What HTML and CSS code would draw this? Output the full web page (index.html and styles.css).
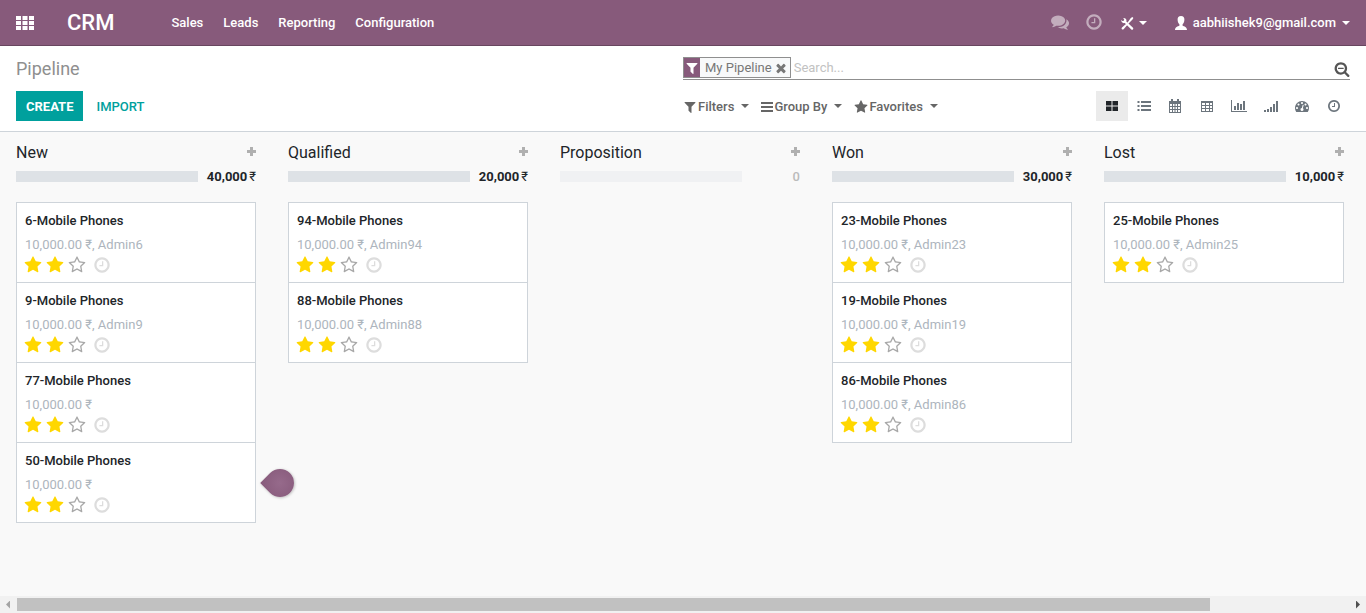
FILE: index.html
```html
<!DOCTYPE html>
<html lang="en">
<head>
<meta charset="utf-8">
<title>Pipeline - CRM</title>
<link rel="stylesheet" href="styles.css">
</head>
<body>
<svg class="sprite" aria-hidden="true">
  <symbol id="star" viewBox="0 0 1792 1792"><path d="M1728 647q0 22-26 48l-363 354 86 500q1 7 1 20 0 21-10.500 35.500t-30.500 14.500q-19 0-40-12l-449-236-449 236q-22 12-40 12-21 0-31.500-14.500t-10.500-35.500q0-6 2-20l86-500-364-354q-25-27-25-48 0-37 56-46l502-73 225-455q19-41 49-41t49 41l225 455 502 73q56 9 56 46z"/></symbol>
  <symbol id="star-o" viewBox="0 0 1792 1792"><path d="M1201 1004l306-297-422-62-189-382-189 382-422 62 306 297-73 421 378-199 377 199zm527-357q0 22-26 48l-363 354 86 500q1 7 1 20 0 50-41 50-19 0-40-12l-449-236-449 236q-22 12-40 12-21 0-31.500-14.500t-10.500-35.500q0-6 2-20l86-500-364-354q-25-27-25-48 0-37 56-46l502-73 225-455q19-41 49-41t49 41l225 455 502 73q56 9 56 46z"/></symbol>
  <symbol id="clock" viewBox="0 0 1792 1792"><path d="M1024 544v448q0 14-9 23t-23 9h-320q-14 0-23-9t-9-23v-64q0-14 9-23t23-9h224v-352q0-14 9-23t23-9h64q14 0 23 9t9 23zm416 352q0-148-73-273t-198-198-273-73-273 73-198 198-73 273 73 273 198 198 273 73 273-73 198-198 73-273zm224 0q0 209-103 385.500t-279.500 279.500-385.500 103-385.500-103-279.500-279.500-103-385.500 103-385.500 279.500-279.500 385.500-103 385.500 103 279.500 279.500 103 385.500z"/></symbol>
  <symbol id="filter" viewBox="0 0 1792 1792"><path d="M1595 295q17 41-14 70l-493 493v742q0 42-39 59-13 5-25 5-27 0-45-19l-256-256q-19-19-19-45v-486l-493-493q-31-29-14-70 17-39 59-39h1280q42 0 59 39z"/></symbol>
  <symbol id="comments" viewBox="0 0 1792 1792"><path d="M1408 768q0 139-94 257t-256.500 186.500-353.500 68.500q-86 0-176-16-124 88-278 128-36 9-86 16h-3q-11 0-20.500-8t-11.500-21q-1-8 2-19l10-16 13-14q5-6 23-25t26-29.500 22.500-29 25-38.500 20.500-44q-124-72-195-177t-71-224q0-139 94-257t256.500-186.500 353.500-68.500 353.500 68.500 256.500 186.500 94 257zm384 256q0 120-71 224.500t-195 176.500q10 24 20.500 44t25 38.500 22.500 29 26 29.500 23 25l12 14 9 16 2 13q-3 14-13 22t-22 7q-50-7-86-16-154-40-278-128-90 16-176 16-271 0-472-132 58 4 88 4 161 0 309-45t264-129q125-92 192-212t67-254q0-77-23-152 129 71 204 178t75 230z"/></symbol>
  <symbol id="times" viewBox="0 0 1792 1792"><path d="M1490 1322q0 40-28 68l-136 136q-28 28-68 28t-68-28l-294-294-294 294q-28 28-68 28t-68-28l-136-136q-28-28-28-68t28-68l294-294-294-294q-28-28-28-68t28-68l136-136q28-28 68-28t68 28l294 294 294-294q28-28 68-28t68 28l136 136q28 28 28 68t-28 68l-294 294 294 294q28 28 28 68z"/></symbol>
  <symbol id="search-minus" viewBox="0 0 1792 1792"><path d="M1088 800v64q0 13-9.500 22.500t-22.500 9.500h-576q-13 0-22.500-9.500t-9.500-22.500v-64q0-13 9.500-22.500t22.500-9.500h576q13 0 22.500 9.500t9.500 22.500zm128 32q0-185-131.500-316.500t-316.500-131.500-316.500 131.500-131.500 316.500 131.500 316.500 316.500 131.500 316.500-131.500 131.500-316.500zm512 832q0 53-37.500 90.500t-90.500 37.500q-54 0-90-38l-343-342q-179 124-399 124-143 0-273.500-55.500t-225-150-150-225-55.500-273.500 55.500-273.500 150-225 225-150 273.500-55.500 273.500 55.500 225 150 150 225 55.500 273.500q0 220-124 399l343 343q37 37 37 90z"/></symbol>
  <symbol id="gauge" viewBox="0 0 1792 1792"><path d="M384 1152q0-53-37.500-90.500t-90.500-37.500-90.500 37.500-37.500 90.500 37.500 90.500 90.500 37.500 90.500-37.500 37.500-90.500zm192-448q0-53-37.500-90.500t-90.500-37.500-90.500 37.500-37.500 90.500 37.500 90.500 90.500 37.500 90.500-37.500 37.500-90.500zm428 481l101-382q6-26-7.500-48.500t-38.500-29.500-48 6.500-30 39.500l-101 382q-60 5-107 43.500t-63 98.500q-20 77 20 146t117 89 146-20 89-117q16-60-6-117t-72-91zm660-33q0-53-37.500-90.500t-90.500-37.500-90.500 37.500-37.500 90.500 37.500 90.500 90.500 37.500 90.500-37.500 37.500-90.500zm-640-640q0-53-37.500-90.500t-90.500-37.500-90.500 37.500-37.500 90.500 37.500 90.500 90.500 37.500 90.500-37.500 37.500-90.500zm448 192q0-53-37.500-90.500t-90.500-37.500-90.500 37.500-37.500 90.500 37.500 90.500 90.500 37.500 90.500-37.500 37.500-90.500zm320 448q0 261-141 483-19 29-54 29h-1402q-35 0-54-29-141-221-141-483 0-182 71-348t191-286 286-191 348-71 348 71 286 191 191 286 71 348z"/></symbol>
  <symbol id="apps" viewBox="0 0 18 14"><path d="M0 0h5v4H0zM6.500 0h5v4h-5zM13 0h5v4h-5zM0 5h5v4H0zM6.500 5h5v4h-5zM13 5h5v4h-5zM0 10h5v4H0zM6.500 10h5v4h-5zM13 10h5v4h-5z"/></symbol>
  <symbol id="tools" viewBox="0 0 14 14"><path d="M13 11.700 6.300 5.500C7 3.500 5.400 1.600 3.200 2l1 1.500-.4 1.300-1.400.3L1.200 4C1 6 2.800 7.600 4.800 7l6.500 6.500c1.300.8 2.500-.7 1.700-1.800zM13.400 2l-1-.9-1.600 1L7.600 6.500 2 11.500c-1.200 1.300.4 2.800 1.600 1.700l5-5.700L12.500 3.600z"/></symbol>
  <symbol id="user" viewBox="0 0 14 14"><path d="M7 0c2.400 0 3.500 1.600 3.400 3.800C10.300 6 9.600 7.300 8.600 8.300v1.400c1.600.7 4.400 1.200 4.400 4.300H1c0-3.100 2.800-3.600 4.400-4.300V8.300c-1-1-1.700-2.300-1.800-4.500C3.500 1.600 4.600 0 7 0z"/></symbol>
  <symbol id="bars" viewBox="0 0 12 10"><path d="M0 0h12v2H0zM0 4h12v2H0zM0 8h12v2H0z"/></symbol>
  <symbol id="plus" viewBox="0 0 9 9"><path d="M3 0h3v3h3v3H6v3H3V6H0V3h3z"/></symbol>
  <symbol id="th-large" viewBox="0 0 14 14"><path d="M1 2h5.500v4.500H1zM7.500 2H13v4.500H7.500zM1 7.500h5.500V12H1zM7.500 7.500H13V12H7.500z"/></symbol>
  <symbol id="list" viewBox="0 0 14 14"><path d="M.5 2h2v2h-2zM4 2h10v2H4zM.5 6h2v2h-2zM4 6h10v2H4zM.5 10h2v2h-2zM4 10h10v2H4z"/></symbol>
  <symbol id="calendar" viewBox="0 0 14 14"><path fill-rule="evenodd" d="M1 2h2V0h2v2h4V0h2v2h2v12H1zM2 5v2h2V5zm3 0v2h1.500V5zm2.500 0v2H9V5zM10 5v2h2V5zM2 8v2h2V8zm3 0v2h1.500V8zm2.500 0v2H9V8zM10 8v2h2V8zM2 11v2h2v-2zm3 0v2h1.500v-2zm2.500 0v2H9v-2zm2.500 0v2h2v-2z"/></symbol>
  <symbol id="table" viewBox="0 0 14 14"><path fill-rule="evenodd" d="M1 2h12v11H1zM2 4v2h3V4zm4 0v2h3V4zm4 0v2h2V4zM2 7v2h3V7zm4 0v2h3V7zm4 0v2h2V7zm-8 3v2h3v-2zm4 0v2h3v-2zm4 0v2h2v-2z"/></symbol>
  <symbol id="chart" viewBox="0 0 16 14"><path d="M0 1h1v11h15v1H0zM3 7h2v4H3zM6 4h2v7H6zM9 5h2v6H9zM12 2h2v9h-2z"/></symbol>
  <symbol id="signal" viewBox="0 0 14 14"><path d="M0 11h2v2H0zM3 10h2v3H3zM6 8h2v5H6zM9 5h2v8H9zM12 2h2v11h-2z"/></symbol>
</svg>

<header class="navbar">
  <button class="apps" aria-label="Applications"><svg><use href="#apps"/></svg></button>
  <a class="brand" href="#">CRM</a>
  <nav class="menu">
    <a href="#">Sales</a><a href="#">Leads</a><a href="#">Reporting</a><a href="#">Configuration</a>
  </nav>
  <div class="systray">
    <button class="dim chat" aria-label="Conversations"><svg class="i18"><use href="#comments"/></svg></button>
    <button class="dim activity" aria-label="Activities"><svg class="i18"><use href="#clock"/></svg></button>
    <button class="debug" aria-label="Developer tools"><svg class="i14"><use href="#tools"/></svg><span class="caret"></span></button>
    <button class="account"><svg class="i14"><use href="#user"/></svg><span>aabhiishek9@gmail.com</span><span class="caret"></span></button>
  </div>
</header>

<section class="control-panel">
  <div class="left">
    <h1>Pipeline</h1>
    <div class="actions"><button class="primary">CREATE</button><button class="link">IMPORT</button></div>
  </div>
  <div class="right">
    <div class="search">
      <div class="facet"><span class="facet-icon"><svg class="i14"><use href="#filter"/></svg></span><span>My Pipeline</span><button aria-label="Remove filter"><svg class="i14"><use href="#times"/></svg></button></div>
      <input type="text" placeholder="Search..." aria-label="Search">
      <button class="search-btn" aria-label="Search options"><svg class="i16"><use href="#search-minus"/></svg></button>
    </div>
    <div class="tools">
      <div class="options">
        <button><svg class="i14"><use href="#filter"/></svg><span>Filters</span><span class="caret"></span></button>
        <button><svg class="bars"><use href="#bars"/></svg><span>Group By</span><span class="caret"></span></button>
        <button><svg class="i14"><use href="#star"/></svg><span>Favorites</span><span class="caret"></span></button>
      </div>
      <div class="views">
        <button class="active" aria-label="Kanban"><svg class="i14"><use href="#th-large"/></svg></button>
        <button aria-label="List"><svg class="i14"><use href="#list"/></svg></button>
        <button aria-label="Calendar"><svg class="i14"><use href="#calendar"/></svg></button>
        <button aria-label="Pivot"><svg class="i14"><use href="#table"/></svg></button>
        <button aria-label="Graph"><svg class="i16"><use href="#chart"/></svg></button>
        <button aria-label="Cohort"><svg class="i14"><use href="#signal"/></svg></button>
        <button aria-label="Dashboard"><svg class="i14"><use href="#gauge"/></svg></button>
        <button aria-label="Activity"><svg class="i14"><use href="#clock"/></svg></button>
      </div>
    </div>
  </div>
</section>

<main class="board" id="board"></main>

<div class="scrollbar" aria-hidden="true"><span class="arrow prev"></span><div class="track"><div class="thumb"></div></div><span class="arrow next"></span></div>
<script src="board.js"></script>
</body>
</html>
```

FILE: styles.css
```css
* { box-sizing: border-box; }
body {
  margin: 0;
  min-height: 100vh;
  display: flex;
  flex-direction: column;
  background: #f9f9f9;
  color: #212529;
  font: 13px/20px Roboto, "Noto Sans", sans-serif;
}
a { color: inherit; text-decoration: none; }
button {
  display: flex;
  align-items: center;
  padding: 0;
  border: 0;
  background: none;
  color: inherit;
  font: inherit;
  cursor: pointer;
}
svg { display: block; flex: none; fill: currentColor; }
.sprite { position: absolute; width: 0; height: 0; }
.i14 { width: 14px; height: 14px; }
.i16 { width: 16px; height: 16px; }
.i18 { width: 18px; height: 18px; }
.caret {
  border: 4px solid transparent;
  border-top-color: currentColor;
  border-bottom: 0;
}

.navbar {
  display: flex;
  align-items: center;
  height: 46px;
  padding: 0 16px;
  background: #875a7b;
  border-bottom: 1px solid #68465f;
  color: #fff;
  font-weight: 500;
}
.apps svg { width: 18px; height: 14px; }
.brand { margin-left: 33px; font-size: 22px; }
.menu { display: flex; gap: 20px; margin-left: 57px; }
.systray { display: flex; align-items: center; margin-left: auto; }
.dim { padding-bottom: 2px; opacity: .5; }
.chat { margin-right: 16px; }
.activity { margin-right: 17px; }
.debug { gap: 5px; margin-right: 27px; }
.account { gap: 5px; }
.account .caret { margin-left: 1px; }

.control-panel {
  display: grid;
  grid-template-columns: 1fr 1fr;
  padding: 10px 16px;
  background: #fff;
  border-bottom: 1px solid #ced4da;
}
h1 { margin: 0 0 10px; font-size: 18px; font-weight: 400; line-height: 25px; color: #8f8f8f; }
.actions { display: flex; gap: 13px; font-weight: 500; }
.actions button { height: 30px; padding-top: 2px; }
.actions .primary { padding: 2px 10px 0; background: #00a09d; color: #fff; font-weight: 700; }
.link { color: #00a09d; }
.search {
  display: flex;
  align-items: center;
  height: 24px;
  margin-bottom: 11px;
  border-bottom: 1px solid #8f8f8f;
}
.facet {
  display: flex;
  align-items: center;
  height: 21px;
  border: 1px solid #8f8f8f;
  background: #f8f9fa;
  color: #777;
}
.facet-icon {
  display: flex;
  align-items: center;
  justify-content: center;
  align-self: stretch;
  width: 16px;
  margin-right: 5px;
  background: #875a7b;
  color: #fff;
}
.facet button { margin: 0 2px; }
.search input {
  flex: 1;
  min-width: 0;
  padding: 0 3px;
  border: 0;
  outline: 0;
  background: none;
  font: inherit;
}
.search input::placeholder { color: #c2c2c2; }
.search-btn { padding-top: 2px; color: #555; }
.tools { display: flex; justify-content: space-between; }
.options { display: flex; gap: 12px; color: #666; font-weight: 500; }
.options button { padding-top: 2px; }
.options button span:nth-child(2) { margin: 0 7px 0 1px; }
.options .caret { margin-bottom: 3px; }
.bars { width: 12px; height: 10px; }
.views { display: flex; width: 254px; color: #6c757d; }
.views button { flex: 1; justify-content: center; height: 30px; }
.views .active { background: #ebebeb; color: #212529; }

.board {
  flex: 1;
  display: flex;
  gap: 32px;
  padding: 10px 16px;
  overflow: hidden;
}
.column { flex: 0 0 240px; }
.column header { display: flex; align-items: center; justify-content: space-between; height: 20px; }
h2 { margin: 0; padding-top: 2px; font-size: 16px; font-weight: 400; }
.add { padding-bottom: 1px; color: #b0b0b0; }
.add svg { width: 9px; height: 9px; }
.summary { display: flex; align-items: center; justify-content: space-between; margin: 5px 0 15px; font-weight: 700; }
.bar { width: 182px; height: 11px; margin-bottom: 1px; background: #dee2e6; }
.total { display: flex; gap: 2px; }
.total span { font-weight: 400; }
.empty .bar { background: #f0f1f3; }
.empty .total { color: #bbb; font-weight: 500; }
.cards { margin: 0; padding: 0; list-style: none; }
.card { position: relative; height: 81px; padding: 8px 8px 0; border: 1px solid #ced4da; background: #fff; }
.card + .card { margin-top: -1px; }
h3 { margin: 0 0 4px; font-size: 13px; font-weight: 500; }
.card p { margin: 0; color: #adb5bd; }
.rating { display: flex; align-items: center; gap: 4px; margin: 1px 0 0 -1px; color: #a8a8a8; }
.rating .on { color: gold; }
.rating .todo { margin-left: 3px; color: #ddd; }
.tip {
  position: absolute;
  left: 249px;
  top: 26px;
  width: 28px;
  height: 28px;
  border-radius: 0 50% 50%;
  background: radial-gradient(#966a8b, #875a7b);
  box-shadow: 0 1px 3px #0004;
  transform: rotate(-45deg);
}

.scrollbar { display: flex; align-items: center; height: 17px; background: #f1f1f1; }
.track { flex: 1; height: 13px; }
.thumb { width: 89.600%; height: 13px; background: #c1c1c1; }
.arrow { width: 17px; height: 8px; background: #a3a3a3; }
.prev { clip-path: polygon(6px 4px, 10px 0, 10px 8px); }
.next { background: #505050; clip-path: polygon(7px 0, 11px 4px, 7px 8px); }
```

FILE: board.js
```js
const columns = [
  { name: "New", total: "40,000", cards: [["6-Mobile Phones", "Admin6"], ["9-Mobile Phones", "Admin9"], ["77-Mobile Phones", ""], ["50-Mobile Phones", "", true]] },
  { name: "Qualified", total: "20,000", cards: [["94-Mobile Phones", "Admin94"], ["88-Mobile Phones", "Admin88"]] },
  { name: "Proposition", total: "", cards: [] },
  { name: "Won", total: "30,000", cards: [["23-Mobile Phones", "Admin23"], ["19-Mobile Phones", "Admin19"], ["86-Mobile Phones", "Admin86"]] },
  { name: "Lost", total: "10,000", cards: [["25-Mobile Phones", "Admin25"]] }
];

const icon = (name, cls) => `<svg class="${cls}"><use href="#${name}"/></svg>`;

const card = ([title, partner, tip]) => `
  <li class="card">
    <h3>${title}</h3>
    <p>10,000.00 ₹${partner ? ", " + partner : ""}</p>
    <div class="rating">
      ${icon("star", "i18 on")}${icon("star", "i18 on")}${icon("star-o", "i18")}${icon("clock", "i18 todo")}
    </div>
    ${tip ? '<span class="tip"></span>' : ""}
  </li>`;

document.getElementById("board").innerHTML = columns.map(c => `
  <section class="column${c.total ? "" : " empty"}">
    <header><h2>${c.name}</h2><button class="add" aria-label="Add to ${c.name}">${icon("plus", "")}</button></header>
    <div class="summary"><div class="bar"></div><div class="total">${c.total ? c.total + "<span>₹</span>" : "0"}</div></div>
    <ul class="cards">${c.cards.map(card).join("")}</ul>
  </section>`).join("");
```
